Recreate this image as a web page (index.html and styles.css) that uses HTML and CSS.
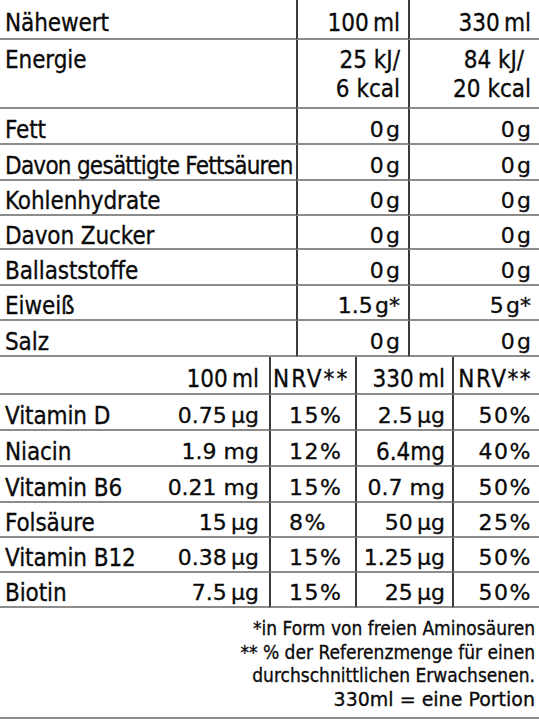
FILE: index.html
```html
<!DOCTYPE html>
<html lang="de">
<head>
<meta charset="utf-8">
<title>Nährwerte</title>
<link rel="stylesheet" href="styles.css">
</head>
<body>
<div class="panel">
  <div class="grid top">
    <div class="c lab">Nähewert</div>
    <div class="c val head">100&thinsp;ml</div>
    <div class="c val head">330&thinsp;ml</div>

    <div class="c lab energy">Energie</div>
    <div class="c val energy cond">25 kJ/<br>6 kcal</div>
    <div class="c val energy cond">84 kJ/&nbsp;<br>20 kcal</div>

    <div class="c lab">Fett</div>
    <div class="c val num">0&#8202;g</div>
    <div class="c val num">0&#8202;g</div>

    <div class="c lab long">Davon gesättigte Fettsäuren</div>
    <div class="c val num">0&#8202;g</div>
    <div class="c val num">0&#8202;g</div>

    <div class="c lab">Kohlenhydrate</div>
    <div class="c val num">0&#8202;g</div>
    <div class="c val num">0&#8202;g</div>

    <div class="c lab">Davon Zucker</div>
    <div class="c val num">0&#8202;g</div>
    <div class="c val num">0&#8202;g</div>

    <div class="c lab">Ballaststoffe</div>
    <div class="c val num">0&#8202;g</div>
    <div class="c val num">0&#8202;g</div>

    <div class="c lab">Eiweiß</div>
    <div class="c val num">1.5&#8202;g*</div>
    <div class="c val num">5&#8202;g*</div>

    <div class="c lab">Salz</div>
    <div class="c val num">0&#8202;g</div>
    <div class="c val num">0&#8202;g</div>
  </div>

  <div class="grid vit">
    <div class="c split"><span></span><span class="head">100&thinsp;ml</span></div>
    <div class="c nrvh head">NRV**</div>
    <div class="c v3 head">330&thinsp;ml</div>
    <div class="c v4 head">NRV**</div>

    <div class="c split"><span class="lab">Vitamin D</span><span class="num">0.75&thinsp;µg</span></div>
    <div class="c nrv num pct">15%</div>
    <div class="c v3 num">2.5&thinsp;µg</div>
    <div class="c v4 num pct">50%</div>

    <div class="c split"><span class="lab">Niacin</span><span class="num">1.9 mg</span></div>
    <div class="c nrv num pct">12%</div>
    <div class="c v3 cond">6.4mg</div>
    <div class="c v4 num pct">40%</div>

    <div class="c split"><span class="lab">Vitamin B6</span><span class="num">0.21 mg</span></div>
    <div class="c nrv num pct">15%</div>
    <div class="c v3 num">0.7 mg</div>
    <div class="c v4 num pct">50%</div>

    <div class="c split"><span class="lab">Folsäure</span><span class="num">15&thinsp;µg</span></div>
    <div class="c nrv num pct">8%</div>
    <div class="c v3 num">50&thinsp;µg</div>
    <div class="c v4 num pct">25%</div>

    <div class="c split"><span class="lab">Vitamin B12</span><span class="num">0.38&thinsp;µg</span></div>
    <div class="c nrv num pct">15%</div>
    <div class="c v3 num">1.25&thinsp;µg</div>
    <div class="c v4 num pct">50%</div>

    <div class="c split"><span class="lab">Biotin</span><span class="num">7.5&thinsp;µg</span></div>
    <div class="c nrv num pct">15%</div>
    <div class="c v3 num">25&thinsp;µg</div>
    <div class="c v4 num pct">50%</div>
  </div>

  <div class="notes">
    <p>*in Form von freien Aminosäuren</p>
    <p>** % der Referenzmenge für einen</p>
    <p>durchschnittlichen Erwachsenen.</p>
    <p class="portion">330ml = eine Portion</p>
  </div>
</div>
</body>
</html>
```

FILE: styles.css
```css
html, body {
  margin: 0;
  padding: 0;
  background: #ffffff;
}

body {
  color: #0a0a0a;
  font-family: "DejaVu Sans Condensed", "DejaVu Sans", sans-serif;
  font-size: 24px;
  -webkit-text-stroke: 0.3px #0a0a0a;
}

.panel {
  width: 539px;
  height: 720px;
  display: flex;
  flex-direction: column;
}

.grid {
  display: grid;
}

.top {
  grid-template-columns: 296px 112px 131px;
  grid-template-rows: 40px 69px 36px 36px 35px 34px 36px 35px 36px;
}

.vit {
  grid-template-columns: 269px 86px 97px 87px;
  grid-template-rows: 38px 36px 36px 36px 35px 35px 35px;
}

.c {
  box-sizing: border-box;
  border-bottom: 2px solid #8c8c8c;
  display: flex;
  align-items: center;
  padding-top: 7px;
  line-height: 28px;
  white-space: nowrap;
}

.lab {
  font-family: "DejaVu Sans Condensed", "DejaVu Sans", sans-serif;
  font-size: 24px;
  letter-spacing: -0.1px;
}

.lab.long {
  letter-spacing: -0.75px;
}

.top .lab {
  padding-left: 5px;
}

.val {
  justify-content: flex-end;
  border-left: 2px solid #3a3a3a;
  padding-right: 8px;
}

.head {
  font-family: "DejaVu Sans Condensed", "DejaVu Sans", sans-serif;
  font-size: 24px;
}

.num {
  font-family: "DejaVu Sans", sans-serif;
  font-size: 22px;
}

.pct {
  letter-spacing: 1.5px;
}

.cond {
  font-family: "DejaVu Sans Condensed", "DejaVu Sans", sans-serif;
  font-size: 24px;
}

.energy {
  align-items: flex-start;
  padding-top: 6px;
  line-height: 29px;
  text-align: right;
}

.split {
  justify-content: space-between;
  padding-left: 5px;
  padding-right: 10px;
}

.nrvh {
  border-left: 2px solid #3a3a3a;
  padding-left: 2px;
  letter-spacing: 2px;
}

.nrv {
  border-left: 2px solid #3a3a3a;
  padding-left: 18px;
}

.v3 {
  border-left: 2px solid #3a3a3a;
  justify-content: flex-end;
  padding-right: 7px;
}

.v4 {
  border-left: 2px solid #3a3a3a;
  justify-content: flex-end;
  padding-right: 7px;
}

.v4.head {
  letter-spacing: 1.5px;
  padding-right: 7px;
}

.notes {
  box-sizing: border-box;
  flex: 1;
  border-bottom: 2px solid #8c8c8c;
  margin-bottom: 1px;
  padding: 9px 4px 0 0;
  text-align: right;
  font-family: "DejaVu Sans Condensed", "DejaVu Sans", sans-serif;
  font-size: 19px;
  line-height: 23.7px;
}

.notes p {
  margin: 0;
}

.notes .portion {
  font-family: "DejaVu Sans", sans-serif;
  font-size: 19px;
}
```
